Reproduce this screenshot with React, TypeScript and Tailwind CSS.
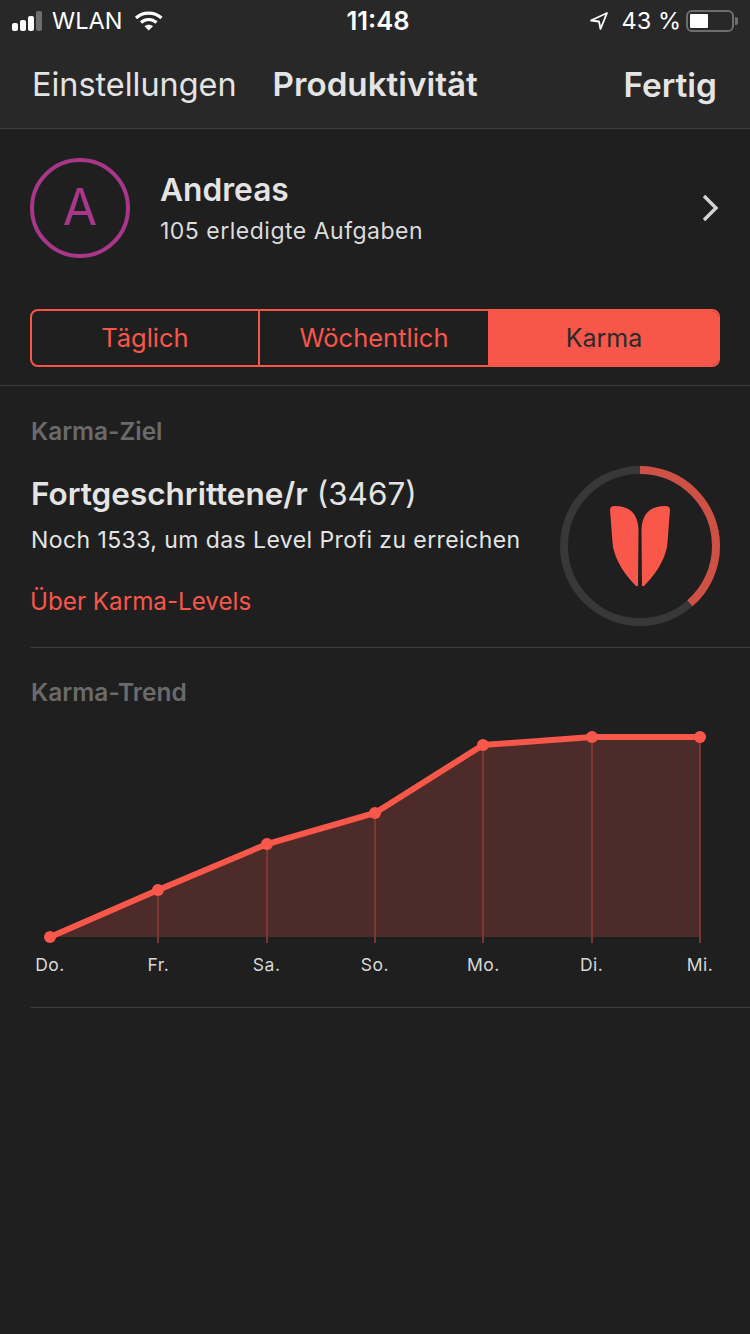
const days = ['Do.', 'Fr.', 'Sa.', 'So.', 'Mo.', 'Di.', 'Mi.'];
const points = [
  [50, 217],
  [158, 170],
  [267, 124],
  [375, 93],
  [483, 25],
  [592, 17],
  [700, 17],
];

function StatusBar() {
  return (
    <div className="flex h-[42px] items-center justify-between px-[12px] text-white">
      <div className="flex w-[246px] items-center">
        <div className="flex items-end gap-[2px]">
          <div className="h-[8px] w-[6px] rounded-[2px] bg-white" />
          <div className="h-[11px] w-[6px] rounded-[2px] bg-white" />
          <div className="h-[15px] w-[6px] rounded-[2px] bg-white" />
          <div className="h-[20px] w-[6px] rounded-[2px] bg-[#6e6e6e]" />
        </div>
        <span className="ml-[10px] text-[23.5px] leading-none">WLAN</span>
        <svg className="ml-[12px]" width="30" height="22" viewBox="0 0 30 22" fill="none" stroke="#fff" strokeWidth="3.2">
          <path d="M2 8 C9 1.5 20 1.5 27.5 8" />
          <path d="M7 12.5 C11.5 8.5 18 8.5 22.5 12.5" />
          <path d="M14.7 20.5 L10.5 16.2 C13 14.2 16.5 14.2 19 16.2 Z" fill="#fff" stroke="none" />
        </svg>
      </div>
      <span className="text-[25.5px] font-semibold leading-none">11:48</span>
      <div className="flex w-[240px] items-center justify-end">
        <svg width="20" height="20" viewBox="0 0 20 20" fill="none" stroke="#fff" strokeWidth="1.8" strokeLinejoin="round">
          <path d="M18 2 L2 9.5 L10 10.5 L11.5 18 Z" />
        </svg>
        <span className="ml-[13px] text-[23.5px] leading-none">43 %</span>
        <div className="ml-[5px] flex h-[22px] w-[48px] items-center rounded-[6px] border-2 border-[#6e6e6e] pl-[2px]">
          <div className="h-[14px] w-[18px] rounded-[1px] bg-white" />
        </div>
        <div className="ml-[1px] h-[8px] w-[3px] rounded-r-[2px] bg-[#6e6e6e]" />
      </div>
    </div>
  );
}

function Header() {
  return (
    <div className="h-[129px] border-b border-[#3f3f3f] bg-[#282828]">
      <StatusBar />
      <div className="flex h-[86px] items-center px-[32px] text-[#e4e4e4]">
        <span className="text-[32.4px]">Einstellungen</span>
        <span className="ml-[36px] text-[33.2px] font-semibold">Produktivität</span>
        <span className="ml-auto mr-[1px] text-[33.4px] font-semibold">Fertig</span>
      </div>
    </div>
  );
}

function Profile() {
  return (
    <div className="flex h-[158px] items-center px-[30px] pb-[1px]">
      <div className="flex h-[100px] w-[100px] items-center justify-center rounded-full border-[4px] border-[#a8378c] text-[50px] text-[#a8378c]">
        A
      </div>
      <div className="ml-[30px] flex-1 pt-[5px]">
        <div className="mt-[-2px] text-[31.7px] font-semibold leading-[36px] text-[#e4e4e4]">Andreas</div>
        <div className="mt-[8px] text-[23px] leading-[30px] tracking-[0.5px] text-[#dcdcdc]">105 erledigte Aufgaben</div>
      </div>
      <svg width="20" height="30" viewBox="0 0 20 30" fill="none" stroke="#d4d4d4" strokeWidth="3.4" className="mr-[-1px] mt-[1px]">
        <path d="M3 3 L15 15 L3 27" />
      </svg>
    </div>
  );
}

function Tabs() {
  return (
    <div className="mx-[30px] mt-[22px] flex h-[58px] overflow-hidden rounded-[8px] border-2 border-[#f85649] pt-[1px] text-[25.5px] text-[#f85649]">
      <div className="mt-[-1px] flex w-[228px] items-center justify-center border-r-2 border-[#f85649] pt-[1px]">Täglich</div>
      <div className="flex w-[228px] items-center justify-center">Wöchentlich</div>
      <div className="mt-[-1px] flex flex-1 items-center justify-center bg-[#f85649] pl-[2px] pt-[1px] text-[25px] text-[#2a2a2a]">Karma</div>
    </div>
  );
}

function KarmaRing() {
  return (
    <svg width="160" height="160" viewBox="0 0 160 160" className="mt-[62px] shrink-0">
      <circle cx="80" cy="80" r="76" fill="none" stroke="#383838" strokeWidth="8" />
      <circle
        cx="80"
        cy="80"
        r="76"
        fill="none"
        stroke="#cf5045"
        strokeWidth="8"
        strokeDasharray="184 478"
        transform="rotate(-90 80 80)"
      />
      <path d="M50 44 C50 41 52 40 55 40 C68 40 78 46 78.5 64 L78 120 L76 120 C66 110 56 96 53 81 C52 72 51 56 50 44 Z" fill="#f9574a" />
      <path d="M110 44 C110 41 108 40 105 40 C92 40 82 46 81.5 64 L82 120 L84 120 C94 110 104 96 107 81 C108 72 109 56 110 44 Z" fill="#f9574a" />
    </svg>
  );
}

function KarmaGoal() {
  return (
    <div className="ml-[31px] mt-[18px] flex h-[244px] items-start border-b border-[#3f3f3f]">
      <div className="w-[529px]">
        <div className="pt-[12px] text-[24.4px] font-semibold leading-[30px] text-[#6a6a6a]">Karma-Ziel</div>
        <div className="mt-[29px] text-[31.5px] leading-[38px] text-[#e4e4e4]">
          <span className="font-semibold">Fortgeschrittene/r</span> (3467)
        </div>
        <div className="mt-[10px] text-[23px] leading-[34px] tracking-[0.42px] text-[#e4e4e4]">Noch 1533, um das Level Profi zu erreichen</div>
        <div className="ml-[-1px] mt-[30px] text-[24.2px] leading-[30px] text-[#f85649]">Über Karma-Levels</div>
      </div>
      <KarmaRing />
    </div>
  );
}

function TrendChart() {
  const line = points.map((p) => p.join(',')).join(' ');
  return (
    <svg width="750" height="230" viewBox="0 0 750 230" className="block">
      <polygon points={`${line} 700,217`} fill="#4c2b29" />
      {points.slice(1).map((p) => (
        <line key={p[0]} x1={p[0]} y1={p[1]} x2={p[0]} y2={223} stroke="#7a3630" strokeWidth="2" />
      ))}
      <polyline points={line} fill="none" stroke="#f9574a" strokeWidth="6" />
      {points.map((p) => (
        <circle key={p[0]} cx={p[0]} cy={p[1]} r="6" fill="#f9574a" />
      ))}
    </svg>
  );
}

export default function App() {
  return (
    <div className="h-[1334px] w-[750px] overflow-hidden bg-[#1f1f1f] font-['Inter',sans-serif]">
      <Header />
      <Profile />
      <Tabs />
      <div className="mt-[18px] border-t border-[#3f3f3f]" />
      <KarmaGoal />
      <div className="ml-[31px] pt-[29px] text-[24.5px] font-semibold leading-[30px] text-[#6a6a6a]">Karma-Trend</div>
      <div className="mt-[13px]">
        <TrendChart />
      </div>
      <div className="mx-[20px] mt-[3px] flex justify-between text-[17.5px] leading-[24px] tracking-[0.5px] text-[#d8d8d8]">
        {days.map((d) => (
          <span key={d} className="w-[60px] text-center">
            {d}
          </span>
        ))}
      </div>
      <div className="ml-[31px] mt-[30px] border-t border-[#3f3f3f]" />
    </div>
  );
}
